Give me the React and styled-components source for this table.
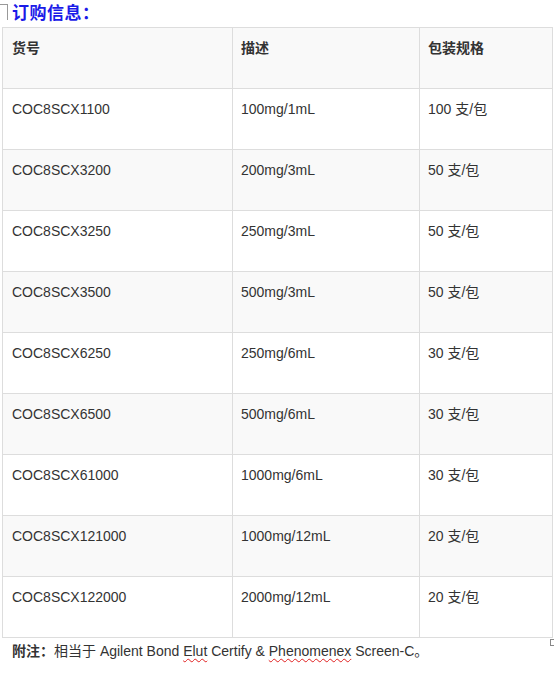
import React from 'react'
import styled, { createGlobalStyle } from 'styled-components';

const rows = [
  ['COC8SCX1100', '100mg/1mL', '100 支/包'],
  ['COC8SCX3200', '200mg/3mL', '50 支/包'],
  ['COC8SCX3250', '250mg/3mL', '50 支/包'],
  ['COC8SCX3500', '500mg/3mL', '50 支/包'],
  ['COC8SCX6250', '250mg/6mL', '30 支/包'],
  ['COC8SCX6500', '500mg/6mL', '30 支/包'],
  ['COC8SCX61000', '1000mg/6mL', '30 支/包'],
  ['COC8SCX121000', '1000mg/12mL', '20 支/包'],
  ['COC8SCX122000', '2000mg/12mL', '20 支/包'],
];

const App = () => {
  return (
    <Page>
      <GlobalStyle />
      <CornerTop />
      <Title>订购信息：</Title>
      <Table>
        <colgroup>
          <col style={{ width: 230 }} />
          <col style={{ width: 187 }} />
          <col style={{ width: 133 }} />
        </colgroup>
        <thead>
          <Row $shaded>
            <HeadCell $first>货号</HeadCell>
            <HeadCell>描述</HeadCell>
            <HeadCell>包装规格</HeadCell>
          </Row>
        </thead>
        <tbody>
          {rows.map((r, i) => (
            <Row key={r[0]} $shaded={i % 2 === 1}>
              <Cell $first>{r[0]}</Cell>
              <Cell>{r[1]}</Cell>
              <Cell>{r[2]}</Cell>
            </Row>
          ))}
        </tbody>
      </Table>
      <CornerBottom />
      <Note>
        <b>附注：</b>相当于 Agilent Bond <Spell>Elut</Spell> Certify &amp; <Spell>Phenomenex</Spell> Screen-C。
      </Note>
    </Page>
  )
}

export default App;

const GlobalStyle = createGlobalStyle`
body {
  margin: 0;
  background: #fff;
  font-family: "Liberation Sans", Arial, "Noto Sans CJK SC", sans-serif;
}
`;

const Page = styled.div`
position: relative;
width: 554px;
height: 677px;
`;

const CornerTop = styled.div`
position: absolute;
top: 4px;
left: 0;
width: 7px;
height: 15px;
border-top: 1px solid #999;
border-right: 1px solid #999;
`;

const CornerBottom = styled.div`
position: absolute;
top: 639px;
left: 550px;
width: 4px;
height: 5px;
border: 1px solid #888;
border-right: none;
`;

const Title = styled.div`
height: 27px;
padding-left: 12px;
box-sizing: border-box;
padding-top: 2px;
font-family: "Noto Sans CJK SC", sans-serif;
font-weight: bold;
font-size: 17px;
line-height: 20px;
letter-spacing: 0.5px;
color: #1a1ae8;
`;

const Table = styled.table`
margin-left: 2px;
width: 551px;
border-collapse: collapse;
table-layout: fixed;
font-size: 14px;
color: #333;
`;

const Row = styled.tr`
background: ${p => (p.$shaded ? '#f9f9f9' : '#fff')};
`;

const Cell = styled.td`
height: 61px;
box-sizing: border-box;
border: 1px solid #ddd;
padding: 9px 8px 0 ${p => (p.$first ? '9px' : '8px')};
vertical-align: top;
line-height: 22px;
font-family: "Liberation Sans", Arial, "Noto Sans CJK SC", sans-serif;
`;

const HeadCell = styled(Cell).attrs({ as: 'th' })`
padding-top: 8px;
text-align: left;
font-weight: bold;
font-family: "Noto Sans CJK SC", sans-serif;
`;

const Note = styled.div`
padding: 1px 0 0 12px;
font-size: 14px;
line-height: 22px;
color: #333;
b {
  font-family: "Noto Sans CJK SC", sans-serif;
  color: #333;
}
`;

const Spell = styled.span`
text-decoration: underline wavy #e02020;
text-decoration-thickness: 1px;
text-underline-offset: 2px;
`;
